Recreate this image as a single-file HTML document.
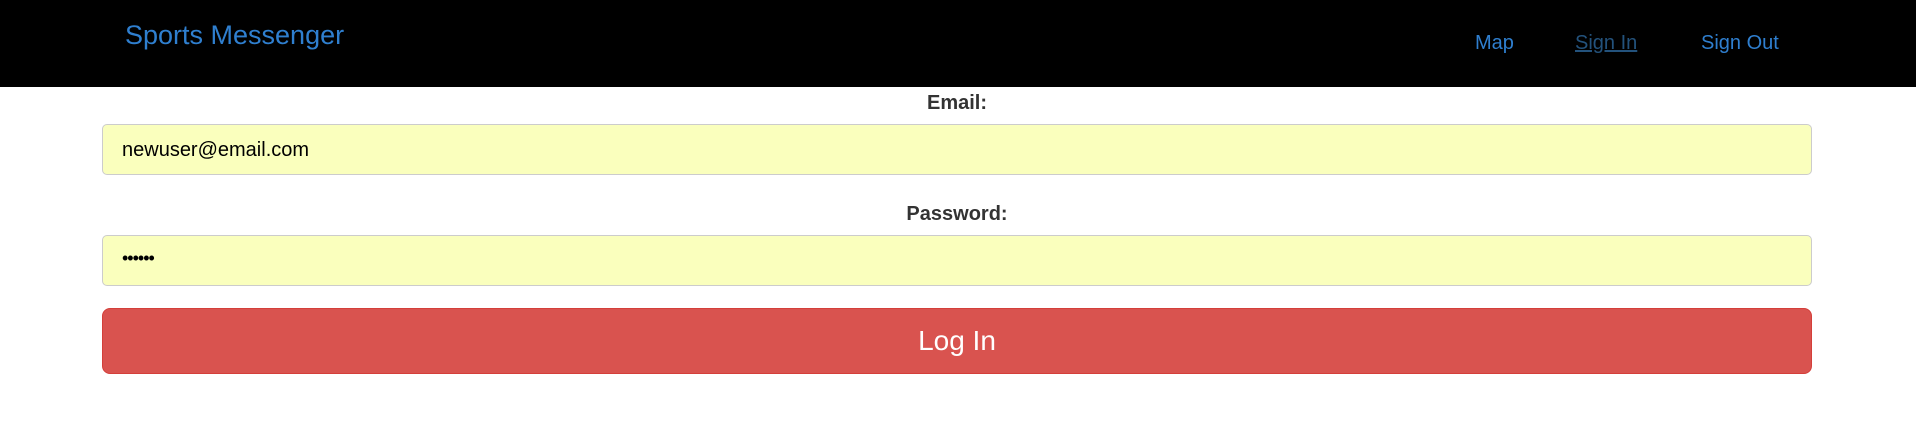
<!DOCTYPE html>
<html><head><meta charset="utf-8"><style>
*{box-sizing:border-box;margin:0;padding:0}
body{width:1918px;height:432px;background:#fff;font-family:"Liberation Sans",Arial,sans-serif;position:relative;overflow:hidden}
.nav{position:absolute;left:0;top:0;width:1916px;height:87px;background:#000}
.t{position:absolute;white-space:nowrap;line-height:1}
.brand{left:125px;top:22px;font-size:27px;color:#2f7fcf}
.nl{top:33px;font-size:20px;color:#2f7fcf}
.lbl{font-weight:bold;font-size:20px;color:#333;width:100%;text-align:center;left:0}
.inp{position:absolute;left:102px;width:1710px;height:51px;background:#faffbd;border:1px solid #ccc;border-radius:5px}
.inp span{position:absolute;left:19px;font-size:20px;color:#000}
.btn{position:absolute;left:102px;top:308px;width:1710px;height:66px;background:#d9534f;border:1px solid #d43f3a;border-radius:8px;color:#fff;font-size:28px;text-align:center;line-height:64px}
</style></head><body>
<div class="nav"></div>
<div class="t brand">Sports Messenger</div>
<div class="t nl" style="left:1475px">Map</div>
<div class="t nl" style="left:1575px;color:#23527c;text-decoration:underline">Sign In</div>
<div class="t nl" style="left:1701px">Sign Out</div>
<div class="t lbl" style="top:93px;left:-2px">Email:</div>
<div class="inp" style="top:124px"><span style="top:14px">newuser@email.com</span></div>
<div class="t lbl" style="top:204px;left:-2px">Password:</div>
<div class="inp" style="top:235px"><span style="top:12px;font-size:18px;letter-spacing:-1px">••••••</span></div>
<div class="btn">Log In</div>
</body></html>
